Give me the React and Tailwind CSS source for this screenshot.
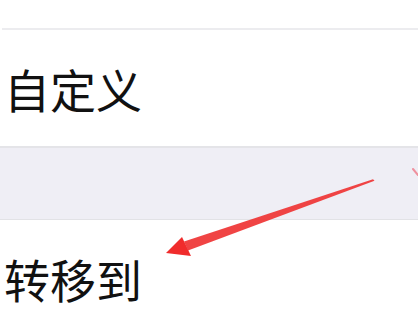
import React from 'react'

function Row({ label }) {
  return (
    <div className="h-[116px] flex items-center pl-[4px] bg-white">
      <span className="text-[46px] leading-none text-[#111] font-['Noto_Sans_CJK_SC','Noto_Sans',sans-serif]">
        {label}
      </span>
    </div>
  )
}

export default function App() {
  return (
    <div className="relative w-[418px] h-[319px] overflow-hidden bg-white">
      <div className="h-[28px]" />
      <div className="h-[2px] bg-[#ececef] ml-[2px]" />
      <Row label="自定义" />
      <div className="h-[2px] bg-[#e4e4e8]" />
      <div className="h-[71px] bg-[#efeef5]" />
      <div className="h-[1px] bg-[#e2e2e6]" />
      <Row label="转移到" />

      <svg className="absolute inset-0 pointer-events-none" width="418" height="319" viewBox="0 0 418 319">
        <path d="M373 179.3 L374.5 180.7 L188 250.5 L184 241.5 Z" fill="#ef3434" opacity="0.92" />
        <path d="M166 253 L182 237 L191 256 Z" fill="#f02c2c" />
        <path d="M413 169 L418 175" stroke="#f06a7a" strokeWidth="2" strokeLinecap="round" opacity="0.7" />
      </svg>
    </div>
  )
}
